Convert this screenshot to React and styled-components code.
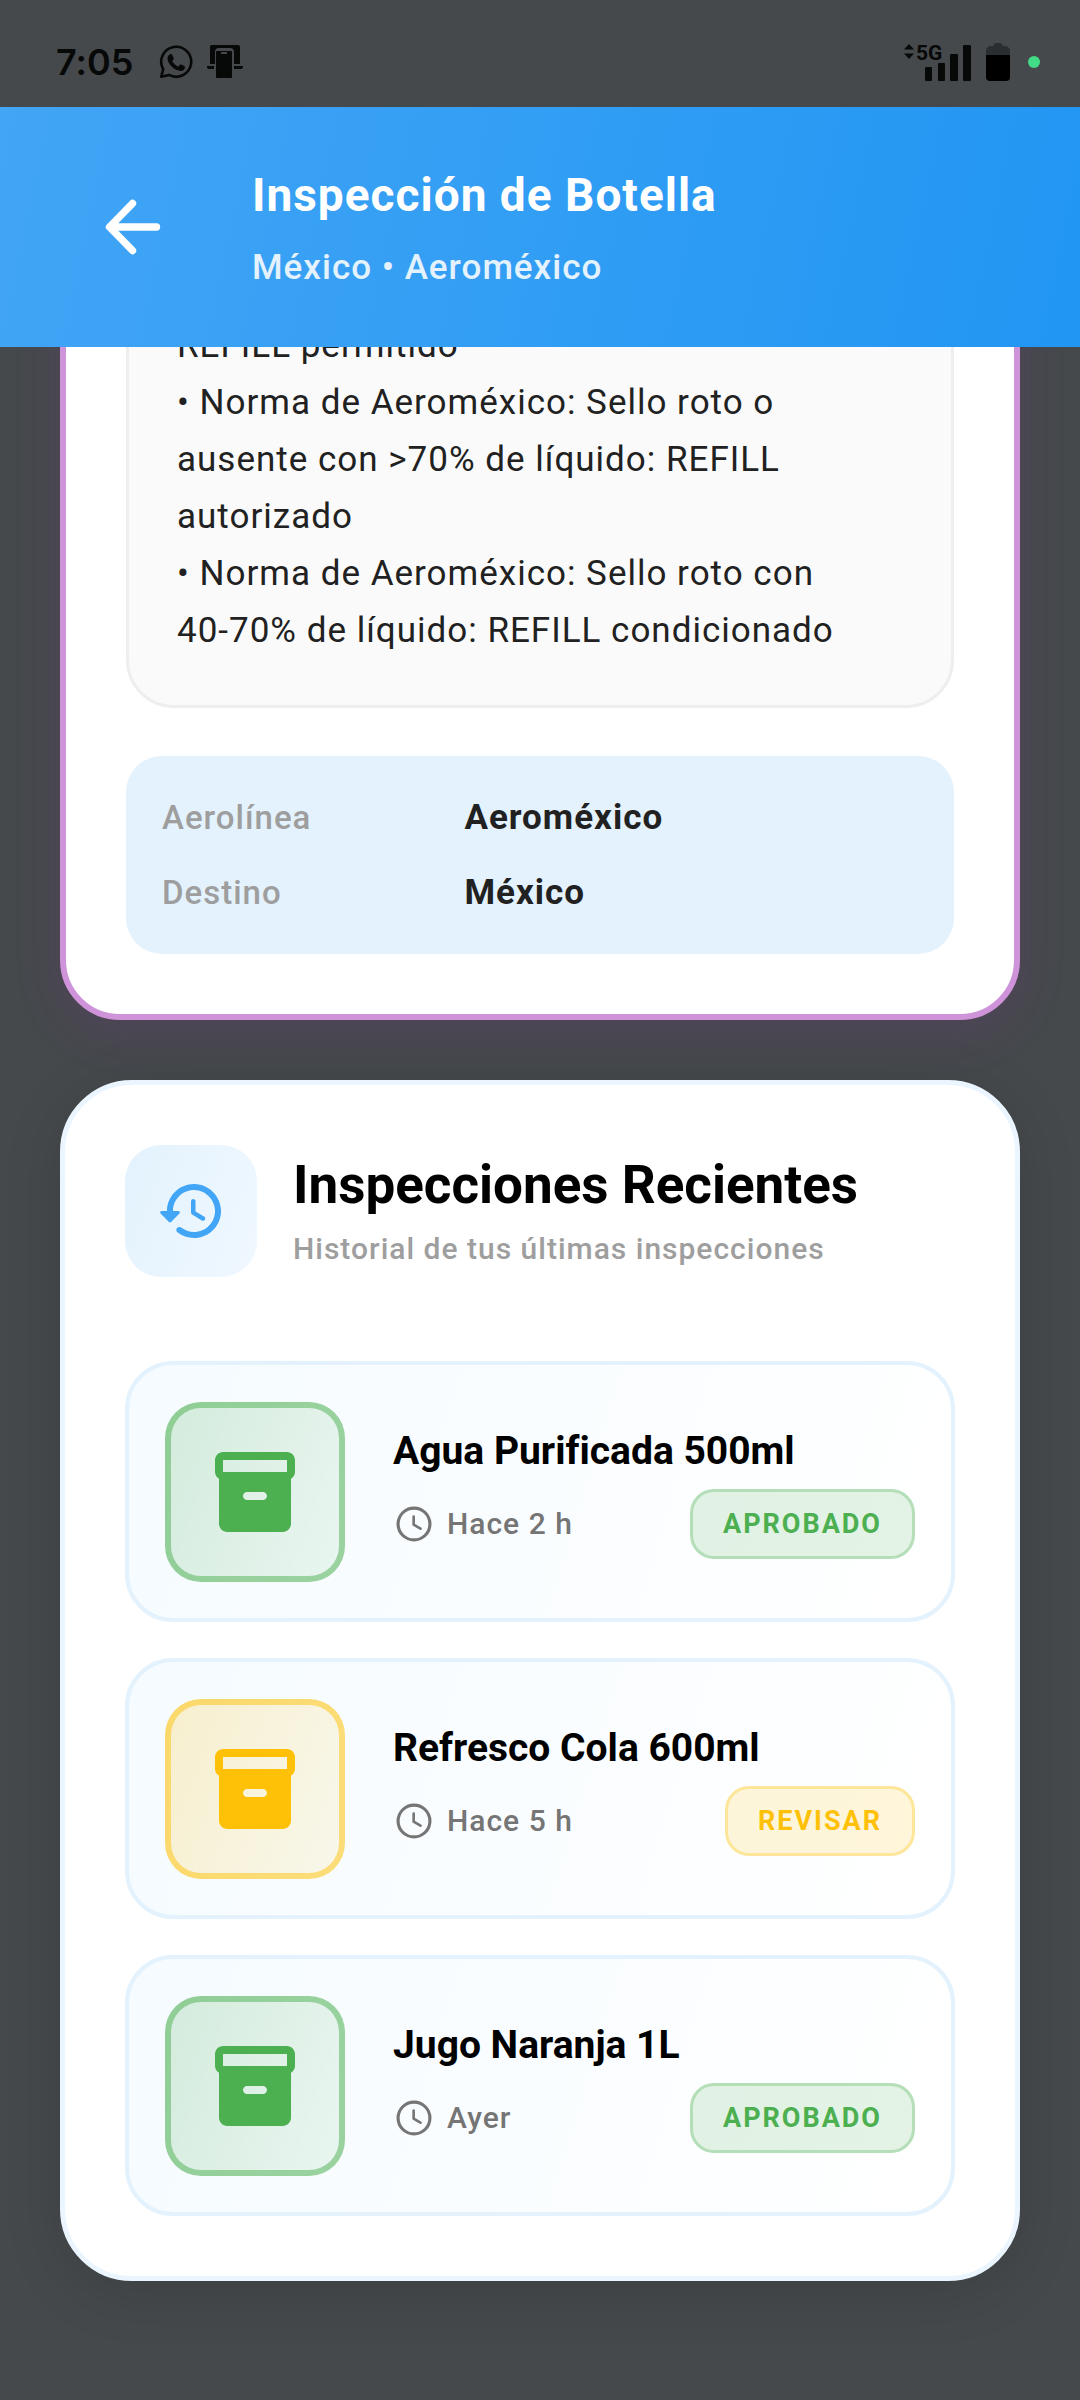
import React from 'react';
import styled, { createGlobalStyle } from 'styled-components';

const rules = [
  'REFILL permitido',
  '• Norma de Aeroméxico: Sello roto o ausente con >70% de líquido: REFILL autorizado',
  '• Norma de Aeroméxico: Sello roto con\n40-70% de líquido: REFILL condicionado',
];

const flight = [
  { label: 'Aerolínea', value: 'Aeroméxico' },
  { label: 'Destino', value: 'México' },
];

const inspections = [
  { id: 1, name: 'Agua Purificada 500ml', time: 'Hace 2 h', status: 'approved' },
  { id: 2, name: 'Refresco Cola 600ml', time: 'Hace 5 h', status: 'review' },
  { id: 3, name: 'Jugo Naranja 1L', time: 'Ayer', status: 'approved' },
];

const statuses = {
  approved: { text: 'APROBADO', color: '#4caf50', rgb: '76, 175, 80' },
  review: { text: 'REVISAR', color: '#ffc107', rgb: '255, 193, 7' },
};

const WhatsappIcon = () => (
  <svg width="34" height="34" viewBox="0 0 34 34" fill="none" aria-hidden="true">
    <path
      d="M2.2 31.8l2-7.6A15 15 0 1 1 10 29.9z"
      stroke="#070808"
      strokeWidth="2.6"
      strokeLinejoin="round"
    />
    <path
      d="M11 9.3c.9-.5 1.9-.2 2.3.7l1.3 3c.3.7.1 1.3-.4 1.9l-1 1.2c1.3 2.6 3.2 4.4 5.9 5.6l1.5-1.7c.5-.6 1-.7 1.7-.4l2.9 1.4c.7.4.9.9.7 1.7-.5 2.3-2.6 3.4-4.8 3.2C14.8 25.2 9 19.2 8.5 13.8c-.1-1.9.9-3.6 2.5-4.5z"
      fill="#070808"
    />
  </svg>
);

const CastIcon = () => (
  <svg width="36" height="36" viewBox="0 0 36 36" fill="#070808" aria-hidden="true">
    <path d="M3 3a2 2 0 0 1 2-2h26a2 2 0 0 1 2 2v17h-6V8a4 4 0 0 0-4-4H12a4 4 0 0 0-4 4v12H3z" />
    <path d="M0 22h7v3H2a2 2 0 0 1-2-2zM27 22h9v1a2 2 0 0 1-2 2h-7z" />
    <path
      fillRule="evenodd"
      d="M10 7h14a1 1 0 0 1 1 1v25a1 1 0 0 1-1 1H10a1 1 0 0 1-1-1V8a1 1 0 0 1 1-1zM14 8v2h6V8z"
    />
  </svg>
);

const SignalIcon = () => (
  <svg width="70" height="40" viewBox="0 0 70 40" fill="#070808" role="img" aria-label="5G">
    <path d="M7 2l5 5.5H2zM7 17l5-5.5H2z" />
    <text
      x="14"
      y="18"
      fontFamily="Roboto, sans-serif"
      fontSize="21"
      fontWeight="700"
      letterSpacing="0"
    >
      5G
    </text>
    <rect x="23" y="25" width="7" height="14" rx="1" />
    <rect x="36" y="21" width="7" height="18" rx="1" />
    <rect x="48" y="12" width="8" height="27" rx="1" />
    <rect x="61" y="3" width="8" height="36" rx="1" />
  </svg>
);

const BatteryIcon = () => (
  <svg width="24" height="38" viewBox="0 0 24 38" aria-hidden="true">
    <path
      d="M7 3l1.5-2.2Q9 0 10 0h4q1 0 1.5.8L17 3h2a5 5 0 0 1 5 5v4H0V8a5 5 0 0 1 5-5z"
      fill="#2b2e30"
    />
    <path d="M0 12h24v22a4 4 0 0 1-4 4H4a4 4 0 0 1-4-4z" fill="#000" />
  </svg>
);

const BackIcon = () => (
  <svg width="84" height="84" viewBox="0 0 84 84" fill="none" aria-hidden="true">
    <path
      d="M42.5 18.5L19.5 42l23 23.5M20 42h46.5"
      stroke="#fff"
      strokeWidth="7.4"
      strokeLinecap="round"
      strokeLinejoin="round"
    />
  </svg>
);

const HistoryIcon = () => (
  <svg width="72" height="72" viewBox="0 0 24 24" fill="#42a5f5" aria-hidden="true">
    <path d="M13.26 3C8.17 2.86 4 6.95 4 12H2.21c-.45 0-.67.54-.35.85l2.79 2.8c.2.2.51.2.71 0l2.79-2.8c.31-.31.09-.85-.36-.85H6c0-3.9 3.18-7.05 7.1-7 3.72.05 6.85 3.18 6.9 6.9.05 3.91-3.1 7.1-7 7.1-1.61 0-3.1-.55-4.28-1.48-.4-.31-.96-.28-1.32.08-.42.42-.39 1.13.08 1.49C9 20.29 10.91 21 13 21c5.05 0 9.14-4.17 9-9.26-.13-4.69-4.05-8.61-8.74-8.74zm-.51 5c-.41 0-.75.34-.75.75v3.68c0 .35.19.68.49.86l3.12 1.85c.36.21.82.09 1.03-.26.21-.36.09-.82-.26-1.03l-2.88-1.71v-3.4c0-.4-.34-.74-.75-.74z" />
  </svg>
);

const BoxIcon = () => (
  <svg width="96" height="96" viewBox="0 0 24 24" fill="currentColor" aria-hidden="true">
    <path d="M20 2H4c-1 0-2 .9-2 2v3.01c0 .72.43 1.34 1 1.69V20c0 1.1 1.1 2 2 2h14c.9 0 2-.9 2-2V8.7c.57-.35 1-.97 1-1.69V4c0-1.1-1-2-2-2zm-6 12h-4c-.55 0-1-.45-1-1s.45-1 1-1h4c.55 0 1 .45 1 1s-.45 1-1 1zm6-7H4V4h16v3z" />
  </svg>
);

const ClockIcon = () => (
  <svg width="42" height="42" viewBox="0 0 24 24" fill="none" stroke="#757575" aria-hidden="true">
    <circle cx="12" cy="12" r="9.1" strokeWidth="1.8" />
    <path
      d="M11.8 7.7v4.7l3.9 2.3"
      strokeWidth="1.5"
      strokeLinecap="round"
      strokeLinejoin="round"
    />
  </svg>
);

const App = () => {
  return (
    <Page>
      <GlobalStyle />
      <StatusBar>
        <StatusGroup>
          <Time>7:05</Time>
          <WhatsappIcon />
          <CastIcon />
        </StatusGroup>
        <StatusGroup>
          <SignalIcon />
          <BatteryIcon />
          <PrivacyDot />
        </StatusGroup>
      </StatusBar>

      <Header>
        <BackButton type="button" aria-label="Volver">
          <BackIcon />
        </BackButton>
        <div>
          <h1>Inspección de Botella</h1>
          <p>México • Aeroméxico</p>
        </div>
      </Header>

      <Content>
        <ResultCard>
          <Rules>
            {rules.map((rule) => (
              <p key={rule}>{rule}</p>
            ))}
          </Rules>
          <Flight>
            {flight.map(({ label, value }) => (
              <div key={label}>
                <dt>{label}</dt>
                <dd>{value}</dd>
              </div>
            ))}
          </Flight>
        </ResultCard>

        <HistoryCard>
          <CardTitle>
            <TitleIcon>
              <HistoryIcon />
            </TitleIcon>
            <div>
              <h2>Inspecciones Recientes</h2>
              <p>Historial de tus últimas inspecciones</p>
            </div>
          </CardTitle>
          <List>
            {inspections.map(({ id, name, time, status }) => {
              const { text, color, rgb } = statuses[status];
              return (
                <Item key={id}>
                  <ItemIcon $color={color} $rgb={rgb}>
                    <BoxIcon />
                  </ItemIcon>
                  <ItemBody>
                    <h3>{name}</h3>
                    <ItemMeta>
                      <ItemTime>
                        <ClockIcon />
                        {time}
                      </ItemTime>
                      <Badge $color={color} $rgb={rgb}>
                        {text}
                      </Badge>
                    </ItemMeta>
                  </ItemBody>
                </Item>
              );
            })}
          </List>
        </HistoryCard>
      </Content>
    </Page>
  );
};

const GlobalStyle = createGlobalStyle`
  * {
    margin: 0;
    padding: 0;
    box-sizing: border-box;
  }
  body {
    background: #45494c;
    font-family: Roboto, sans-serif;
    font-variant-ligatures: none;
  }
  svg {
    display: block;
    flex-shrink: 0;
  }
`;

const Page = styled.div`
  min-height: 100vh;
  letter-spacing: 1px;
`;

const StatusBar = styled.div`
  display: flex;
  justify-content: space-between;
  align-items: center;
  height: 107px;
  padding: 16px 40px 0 56px;
`;

const StatusGroup = styled.div`
  display: flex;
  align-items: center;
  gap: 14px;
`;

const Time = styled.time`
  margin-right: 12px;
  font-family: Inter, sans-serif;
  font-size: 36px;
  font-weight: 600;
  line-height: 40px;
  letter-spacing: 0;
  color: #070808;
`;

const PrivacyDot = styled.span`
  width: 12px;
  height: 12px;
  margin-left: 4px;
  border-radius: 50%;
  background: #41dc85;
`;

const Header = styled.header`
  position: relative;
  z-index: 1;
  display: flex;
  align-items: center;
  gap: 48px;
  min-height: 240px;
  padding: 48px 60px;
  background: linear-gradient(102deg, #42a5f5, #2196f3);
  h1 {
    margin-bottom: 24px;
    font-size: 46px;
    font-weight: 700;
    line-height: 58px;
    color: #fff;
  }
  p {
    font-size: 35px;
    font-weight: 500;
    line-height: 40px;
    color: #e3f2fd;
  }
`;

const BackButton = styled.button`
  display: flex;
  justify-content: center;
  align-items: center;
  width: 144px;
  height: 144px;
  border: none;
  background: none;
  cursor: pointer;
`;

/* the first card is scrolled partly under the header */
const Content = styled.main`
  display: flex;
  flex-direction: column;
  gap: 60px;
  margin-top: -147px;
  padding: 0 60px 120px;
`;

const Card = styled.section`
  padding: 60px;
  background: #fff;
`;

const ResultCard = styled(Card)`
  border: 6px solid #ce93d8;
  border-radius: 60px;
  box-shadow: 0 12px 48px rgba(156, 39, 176, 0.15);
`;

const Rules = styled.div`
  margin-bottom: 48px;
  padding: 48px 48px 46px;
  border: 3px solid #eee;
  border-radius: 48px;
  background: #fafafa;
  font-size: 35px;
  line-height: 57px;
  white-space: pre-line;
  color: #212121;
`;

const Flight = styled.dl`
  display: grid;
  gap: 24px;
  padding: 36px;
  border-radius: 36px;
  background: #e3f2fd;
  div {
    display: grid;
    grid-template-columns: 2fr 3fr;
    align-items: center;
    line-height: 51px;
  }
  dt {
    font-size: 33px;
    font-weight: 500;
    color: #9e9e9e;
  }
  dd {
    font-size: 35px;
    font-weight: 700;
    color: #212121;
  }
`;

const HistoryCard = styled(Card)`
  border: 5px solid #ebf5ff;
  border-radius: 72px;
  box-shadow: 0 12px 60px rgba(0, 0, 0, 0.12);
`;

const CardTitle = styled.div`
  display: flex;
  align-items: center;
  gap: 36px;
  margin-bottom: 84px;
  h2 {
    margin-bottom: 12px;
    font-size: 53px;
    font-weight: 700;
    line-height: 64px;
    letter-spacing: 0;
    color: #000;
  }
  p {
    font-size: 30px;
    font-weight: 500;
    line-height: 40px;
    color: #9e9e9e;
  }
`;

const TitleIcon = styled.div`
  display: flex;
  flex-shrink: 0;
  justify-content: center;
  align-items: center;
  width: 132px;
  height: 132px;
  border-radius: 36px;
  background: linear-gradient(110deg, #e3f2fd, #f0f8ff);
`;

const List = styled.ul`
  display: grid;
  gap: 36px;
  list-style: none;
`;

const Item = styled.li`
  display: flex;
  align-items: center;
  gap: 48px;
  min-height: 261px;
  padding: 36px;
  border: 4px solid #e3f2fd;
  border-radius: 48px;
  background: linear-gradient(107deg, #f5fbff, #fff);
`;

const ItemIcon = styled.div`
  display: flex;
  flex-shrink: 0;
  justify-content: center;
  align-items: center;
  width: 180px;
  height: 180px;
  border: 6px solid rgba(${(props) => props.$rgb}, 0.5);
  border-radius: 36px;
  background: linear-gradient(
      110deg,
      rgba(${(props) => props.$rgb}, 0.2),
      rgba(${(props) => props.$rgb}, 0.08)
    )
    border-box;
  color: ${(props) => props.$color};
`;

const ItemBody = styled.div`
  flex: 1;
  h3 {
    margin-bottom: 12px;
    font-size: 39px;
    font-weight: 700;
    line-height: 52px;
    letter-spacing: 0;
    color: #000;
  }
`;

const ItemMeta = styled.div`
  display: flex;
  justify-content: space-between;
  align-items: center;
`;

const ItemTime = styled.span`
  display: flex;
  align-items: center;
  gap: 12px;
  font-size: 30px;
  font-weight: 500;
  line-height: 40px;
  color: #757575;
`;

const Badge = styled.span`
  padding: 16px 30px;
  border: 3px solid rgba(${(props) => props.$rgb}, 0.3);
  border-radius: 24px;
  background: rgba(${(props) => props.$rgb}, 0.15);
  font-size: 27px;
  font-weight: 700;
  line-height: 32px;
  letter-spacing: 2px;
  color: ${(props) => props.$color};
`;

export default App;
